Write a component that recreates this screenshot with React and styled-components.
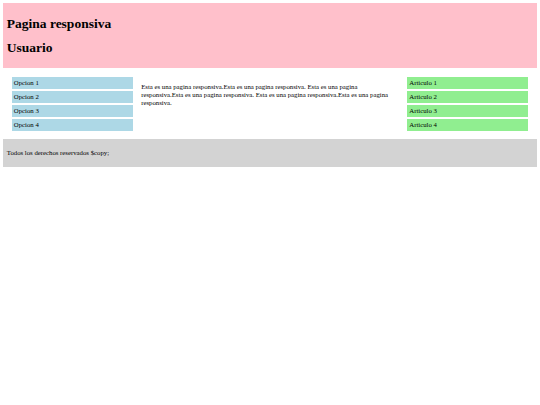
import styled, { createGlobalStyle } from "styled-components";

// la captura es 1280px reducida a 540px, todo va en esa escala
const GlobalStyle = createGlobalStyle`
  body {
    margin: 3.375px;
    font-family: "Liberation Serif", "Times New Roman", serif;
    font-size: 6.75px;
    line-height: 7.76px;
    color: #000;
    background: #fff;
  }
`

const Header = styled.header`
  background-color: pink;
  padding: 3.375px;
`

const Title = styled.h1`
  font-size: 13.5px;
  line-height: 15.5px;
  font-weight: bold;
  margin: 9.05px 0;
`

const Main = styled.main`
  display: grid;
  grid-template-columns: 121px 1fr 121px;
  padding: 8.4px;
`

const List = styled.div`
  display: flex;
  flex-direction: column;
  gap: 2.1px;
`

const Item = styled.div`
  background-color: ${(p) => p.$bg};
  padding: 2.1px;
  height: 7.76px;
`

const Content = styled.section`
  padding: 0 8.4px;

  p {
    margin: 6.75px 0;
  }
`

const Footer = styled.footer`
  background-color: lightgray;
  padding: 3.375px;

  p {
    margin: 6.75px 0;
  }
`

const opciones = ["Opcion 1", "Opcion 2", "Opcion 3", "Opcion 4"];
const articulos = ["Articulo 1", "Articulo 2", "Articulo 3", "Articulo 4"];

function App() {
  return (
    <>
      <GlobalStyle />
      <Header>
        <Title>Pagina responsiva</Title>
        <Title>Usuario</Title>
      </Header>
      <Main>
        <List>
          {opciones.map((o) => (
            <Item key={o} $bg="lightblue">{o}</Item>
          ))}
        </List>
        <Content>
          <p>
            Esta es una pagina responsiva.Esta es una pagina responsiva. Esta es una pagina
            responsiva.Esta es una pagina responsiva. Esta es una pagina responsiva.Esta es una pagina
            responsiva.
          </p>
        </Content>
        <List>
          {articulos.map((a) => (
            <Item key={a} $bg="lightgreen">{a}</Item>
          ))}
        </List>
      </Main>
      <Footer>
        <p>Todos los derechos reservados $copy;</p>
      </Footer>
    </>
  );
}

export default App;
